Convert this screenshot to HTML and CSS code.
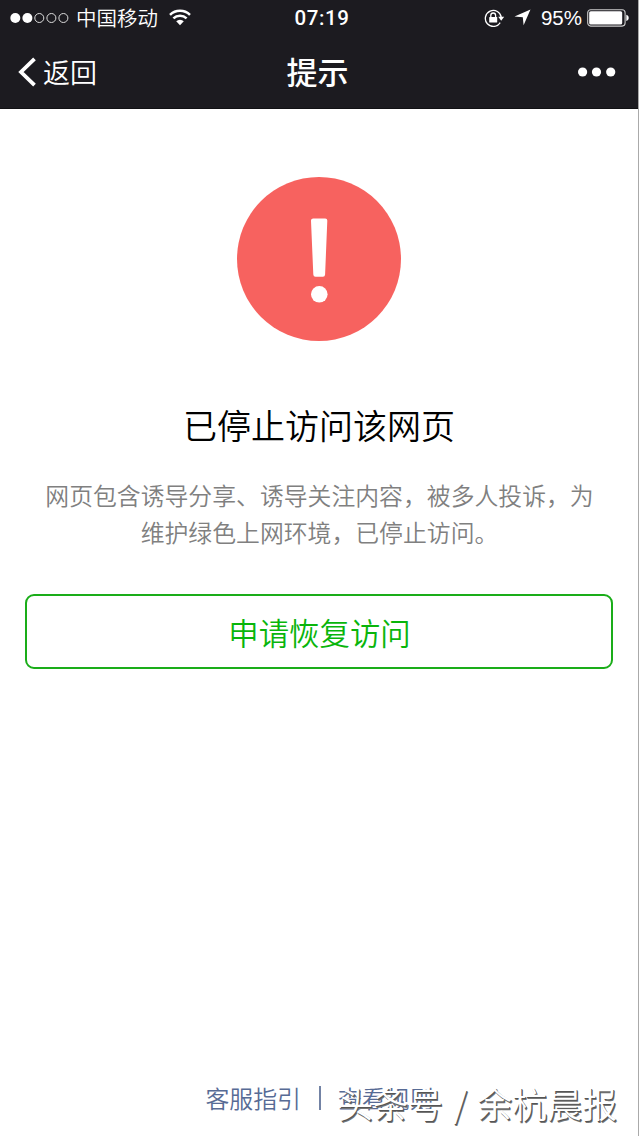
FILE: index.html
```html
<!DOCTYPE html>
<html lang="zh-CN">

<head>
    <meta charset="UTF-8">
    <title>提示</title>
    <link rel="stylesheet" href="styles.css">
</head>

<body>
    <header>
        <div class="status">
            <div class="status-left">
                <svg class="signal" width="59" height="12" viewBox="0 0 59 12">
                    <circle cx="5.3" cy="6" r="5" fill="#fff" />
                    <circle cx="17.4" cy="6" r="5" fill="#fff" />
                    <g fill="none" stroke="#ddd" stroke-width="1">
                        <circle cx="29.3" cy="6" r="4.5" />
                        <circle cx="41.4" cy="6" r="4.5" />
                        <circle cx="53.4" cy="6" r="4.5" />
                    </g>
                </svg>
                <span class="carrier">中国移动</span>
                <svg class="wifi" width="22" height="17" viewBox="0 0 22 17">
                    <g fill="none" stroke="#fff" stroke-width="2.5">
                        <path d="M1 5.9a14.2 14.2 0 0 1 20 0" />
                        <path d="M4.4 9.4a9.4 9.4 0 0 1 13.2 0" />
                    </g>
                    <path d="M7.2 12.2a5.4 5.4 0 0 1 7.6 0L11 16.3z" fill="#fff" />
                </svg>
            </div>
            <span class="time">07:19</span>
            <div class="status-right">
                <svg class="lock" width="21" height="18" viewBox="0 0 21 18">
                    <path d="M16.2 13.6a8 8 0 1 1 1.1-5" fill="none" stroke="#fff" stroke-width="1.3" />
                    <path d="M14.2 7.8h6l-3 4z" fill="#fff" />
                    <rect x="5.2" y="8" width="8" height="5.6" rx=".6" fill="#fff" />
                    <path d="M6.8 8.2V6.4a2.4 2.4 0 0 1 4.8 0v1.8" fill="none" stroke="#fff" stroke-width="1.3" />
                </svg>
                <svg class="arrow" width="17" height="17" viewBox="0 0 17 17">
                    <path d="M16.5.5L9.6 16.2 8.8 8.3.5 7.5z" fill="#fff" />
                </svg>
                <span class="percent">95%</span>
                <svg class="battery" width="43" height="18" viewBox="0 0 43 18">
                    <rect x=".7" y=".7" width="37.4" height="16.4" rx="3" fill="none" stroke="#ccc" stroke-width="1.1" />
                    <rect x="2.2" y="2.2" width="33" height="13.4" rx="1.6" fill="#fff" />
                    <path d="M39.3 5.8c3.2.6 3.2 5.6 0 6.2z" fill="#fff" />
                </svg>
            </div>
        </div>
        <nav>
            <a class="back">
                <svg width="18" height="30" viewBox="0 0 18 30">
                    <path d="M16.5 1.8L3 15l13.5 13.2" fill="none" stroke="#fff" stroke-width="3.8" />
                </svg>
                <span>返回</span>
            </a>
            <h1>提示</h1>
            <svg class="more" width="38" height="10" viewBox="0 0 38 10">
                <g fill="#fff">
                    <circle cx="4.6" cy="5" r="4.6" />
                    <circle cx="18.5" cy="5" r="4.6" />
                    <circle cx="32.7" cy="5" r="4.6" />
                </g>
            </svg>
        </nav>
    </header>

    <main>
        <svg class="warn" width="164" height="164" viewBox="0 0 164 164">
            <circle cx="82" cy="82" r="82" fill="#f7625f" />
            <path d="M76.2 41.5h12q2.2 0 2.1 2.2l-2.2 53.8q-.1 2.3-2.2 2.3h-7.4q-2.1 0-2.2-2.3l-2.3-53.800q-.1-2.2 2.2-2.2z" fill="#fff" />
            <circle cx="82.3" cy="117.3" r="8.3" fill="#fff" />
        </svg>
        <h2>已停止访问该网页</h2>
        <p>网页包含诱导分享、诱导关注内容，被多人投诉，为<br>维护绿色上网环境，已停止访问。</p>
        <button>申请恢复访问</button>
    </main>

    <footer>
        <a>客服指引</a>
        <span class="line"></span>
        <a>查看规则</a>
    </footer>

    <div class="watermark">头条号 / 余杭晨报</div>
</body>

</html>
```

FILE: styles.css
```css
* {
    box-sizing: border-box;
}

body {
    margin: 0;
    height: 1136px;
    display: flex;
    flex-direction: column;
    position: relative;
    overflow: hidden;
    background-color: #fff;
    border-right: 1px solid #aaa;
    font-family: "Noto Sans CJK SC", sans-serif;
    font-weight: 350;
}

header {
    height: 109px;
    margin-right: -1px;
    background-color: #1c1b20;
    border-bottom: 1px solid #111114;
    color: #fff;
}

svg {
    display: block;
    flex: none;
}

.status {
    height: 35px;
    padding: 0 9px 0 10px;
    display: grid;
    grid-template-columns: 1fr auto 1fr;
    align-items: center;
}

.status-left,
.status-right {
    display: flex;
    align-items: center;
}

.status-right {
    justify-content: flex-end;
}

.carrier {
    margin-left: 7px;
    font-size: 20.5px;
    line-height: 34px;
    margin-top: -2px;
}

.wifi {
    margin-left: 11px;
}

.time {
    font-family: Roboto, sans-serif;
    font-size: 20.5px;
    font-weight: 500;
    letter-spacing: 0.6px;
    margin-left: 4px;
}

.arrow {
    margin-left: 9px;
}

.percent {
    margin: 0 5px 0 10px;
    font-family: "Liberation Sans", sans-serif;
    font-size: 20.5px;
}

nav {
    height: 74px;
    padding: 0 23px 0 18px;
    display: grid;
    grid-template-columns: 1fr auto 1fr;
    align-items: center;
}

.back {
    display: flex;
    align-items: center;
    gap: 7px;
    font-size: 27px;
    line-height: 40px;
}

h1 {
    margin: -2px 0 0 1px;
    font-size: 31px;
    line-height: 40px;
    font-weight: 500;
}

.more {
    justify-self: end;
}

main {
    padding: 68px 25px 0;
    text-align: center;
}

.warn {
    margin: 0 auto;
}

h2 {
    margin: 59px 0 0;
    font-size: 34px;
    line-height: 50px;
    font-weight: 350;
    color: #000;
}

p {
    margin: 26px -11px 0 -10px;
    font-size: 23.85px;
    line-height: 37px;
    color: #808080;
}

button {
    display: block;
    width: 588px;
    height: 75px;
    margin-top: 44px;
    padding: 1px 0 0 1px;
    border: 2px solid #1aad19;
    border-radius: 9px;
    background: none;
    font-family: inherit;
    font-weight: 350;
    font-size: 30.4px;
    color: #09b50b;
}

footer {
    margin-top: auto;
    padding: 0 0 20px 1px;
    display: flex;
    justify-content: center;
    align-items: center;
    font-size: 23.9px;
    line-height: 36px;
    color: #576b95;
}

.line {
    width: 2px;
    height: 24px;
    margin: 0 17.5px;
    background-color: #7383a5;
}

.watermark {
    position: absolute;
    right: 21px;
    bottom: 8px;
    font-size: 35px;
    line-height: 50px;
    word-spacing: 2.3px;
    color: #fff;
    text-shadow: 1px 1px 0 #555, 1.5px 1.5px 0 #777;
}
```
